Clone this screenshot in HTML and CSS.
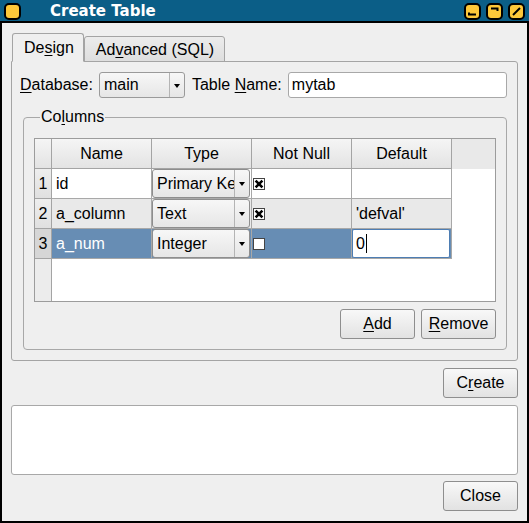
FILE: index.html
```html
<!DOCTYPE html>
<html>
<head>
<meta charset="utf-8">
<link rel="stylesheet" href="styles.css">
</head>
<body>
<div class="window">
  <div class="titlebar">
    <svg class="ticon" width="17" height="17" viewBox="0 0 17 17"><rect x="1" y="1" width="15" height="15" rx="4" fill="#fdc83a" stroke="#000" stroke-width="2"/></svg>
    <span class="title">Create Table</span>
    <div class="tbtns">
      <svg width="17" height="17" viewBox="0 0 17 17"><rect x="1" y="1" width="15" height="15" rx="4" fill="#fdc83a" stroke="#000" stroke-width="2"/><path d="M5 9.5 V11.5 H12" fill="none" stroke="#000" stroke-width="2"/></svg>
      <svg width="17" height="17" viewBox="0 0 17 17"><rect x="1" y="1" width="15" height="15" rx="4" fill="#fdc83a" stroke="#000" stroke-width="2"/><path d="M5 5.5 H11.5 V8" fill="none" stroke="#000" stroke-width="2"/></svg>
      <svg width="17" height="17" viewBox="0 0 17 17"><rect x="1" y="1" width="15" height="15" rx="4" fill="#fdc83a" stroke="#000" stroke-width="2"/><path d="M5 12 L12 5" fill="none" stroke="#000" stroke-width="2"/></svg>
    </div>
  </div>
  <div class="body">
    <div class="tabs">
      <div class="tab active">De<u>s</u>ign</div>
      <div class="tab">Ad<u>v</u>anced (SQL)</div>
    </div>
    <div class="pane">
      <div class="dbrow">
        <span class="lbl"><u>D</u>atabase:</span>
        <div class="combo db"><span class="ctext">main</span><span class="carrow"><i></i></span></div>
        <span class="lbl tn">Table <u>N</u>ame:</span>
        <div class="input">mytab</div>
      </div>
      <fieldset class="group">
        <legend>Co<u>l</u>umns</legend>
        <div class="grid">
          <div class="hc"></div>
          <div class="hc">Name</div>
          <div class="hc">Type</div>
          <div class="hc">Not Null</div>
          <div class="hc">Default</div>
          <div class="hfill"></div>

          <div class="rh">1</div>
          <div class="cell">id</div>
          <div class="cell tc"><div class="combo"><span class="ctext">Primary Key</span><span class="carrow"><i></i></span></div></div>
          <div class="cell cc"><svg class="chk" width="12" height="12" viewBox="0 0 12 12"><rect x="0.5" y="0.5" width="11" height="11" fill="#fff" stroke="#444"/><path d="M2.6 2.6 L9.4 9.4 M9.4 2.6 L2.6 9.4" stroke="#000" stroke-width="2.6"/></svg></div>
          <div class="cell"></div>
          <div class="fill"></div>

          <div class="rh">2</div>
          <div class="cell alt">a_column</div>
          <div class="cell alt tc"><div class="combo"><span class="ctext">Text</span><span class="carrow"><i></i></span></div></div>
          <div class="cell alt cc"><svg class="chk" width="12" height="12" viewBox="0 0 12 12"><rect x="0.5" y="0.5" width="11" height="11" fill="#fff" stroke="#444"/><path d="M2.6 2.6 L9.4 9.4 M9.4 2.6 L2.6 9.4" stroke="#000" stroke-width="2.6"/></svg></div>
          <div class="cell alt">'defval'</div>
          <div class="fill"></div>

          <div class="rh cur">3</div>
          <div class="cell sel">a_num</div>
          <div class="cell sel tc"><div class="combo focus"><span class="ctext">Integer</span><span class="carrow"><i></i></span></div></div>
          <div class="cell sel cc"><svg class="chk" width="12" height="12" viewBox="0 0 12 12"><rect x="0.5" y="0.5" width="11" height="11" fill="#fff" stroke="#444"/></svg></div>
          <div class="cell ed"><div class="editor">0<span class="caret"></span></div></div>
          <div class="fill"></div>

          <div class="rhfill"></div>
          <div class="bfill"></div>
        </div>
        <div class="btnrow">
          <div class="btn"><u>A</u>dd</div>
          <div class="btn"><u>R</u>emove</div>
        </div>
      </fieldset>
    </div>
    <div class="actions create"><div class="btn">C<u>r</u>eate</div></div>
    <div class="log"></div>
    <div class="actions"><div class="btn">Close</div></div>
  </div>
</div>
</body>
</html>
```
FILE: styles.css
```css
* { box-sizing: border-box; }
html, body { margin: 0; padding: 0; }
body {
  font-family: "Liberation Sans", Arial, sans-serif;
  font-size: 16px;
  color: #000;
  background: #000;
}
u { text-decoration: underline; text-underline-offset: 2px; }

.window {
  width: 529px;
  height: 523px;
  display: flex;
  flex-direction: column;
  background: #000;
}
.titlebar {
  height: 23px;
  background: #0b5e87;
  border-bottom: 2px solid #000;
  display: flex;
  align-items: center;
  padding: 1px 4px 0 4px;
}
.ticon { display: block; }
.title {
  font-family: "DejaVu Sans", sans-serif;
  font-weight: bold;
  font-size: 15px;
  color: #fff;
  margin-left: 29px;
  line-height: 18px;
}
.tbtns {
  margin-left: auto;
  display: flex;
  gap: 5px;
}
.tbtns svg { display: block; }

.body {
  flex: 1;
  margin: 0 2px 2px 2px;
  background: #efefef;
  padding: 10px 9px 10px 9px;
  display: flex;
  flex-direction: column;
}

.tabs {
  display: flex;
  align-items: flex-end;
  padding-left: 1px;
  height: 29px;
  position: relative;
  z-index: 1;
  margin-bottom: -1px;
}
.tab {
  height: 26px;
  border: 1px solid #a4a4a4;
  border-radius: 3px 3px 0 0;
  background: linear-gradient(#ececec, #dedede);
  padding: 1px 10px 0 11px;
  display: flex;
  align-items: center;
}
.tab.active {
  height: 29px;
  background: #efefef;
  border-bottom-color: #efefef;
  padding: 0 9px 0 11px;
}

.pane {
  height: 300px;
  border: 1px solid #a4a4a4;
  border-radius: 0 3px 3px 3px;
  padding: 10px 10px 9px 8px;
  display: flex;
  flex-direction: column;
}
.dbrow {
  display: flex;
  align-items: center;
  height: 26px;
}
.lbl { white-space: nowrap; }
.combo {
  display: flex;
  height: 26px;
  border: 1px solid #9a9a9a;
  border-radius: 3px;
  background: linear-gradient(#f7f7f7, #e6e6e6);
  overflow: hidden;
}
.combo.db { width: 86px; margin-left: 6px; margin-right: 7px; }
.ctext {
  flex: 1;
  padding-left: 4px;
  display: flex;
  align-items: center;
  white-space: nowrap;
  overflow: hidden;
}
.carrow {
  width: 15px;
  border-left: 1px solid #b4b4b4;
  display: flex;
  align-items: center;
  justify-content: center;
}
.carrow i {
  display: block;
  width: 0; height: 0;
  border-left: 3.5px solid transparent;
  border-right: 3.5px solid transparent;
  border-top: 4px solid #000;
  margin-top: 1px;
}
.input {
  margin-left: 6px;
  flex: 1;
  height: 26px;
  background: #fff;
  border: 1px solid #a8a8a8;
  border-radius: 3px;
  padding-left: 3px;
  display: flex;
  align-items: center;
}

.group {
  margin: 10px 0 0 3px;
  border: 1px solid #a8a8a8;
  border-radius: 4px;
  padding: 12px 10px 10px 10px;
  min-width: 0;
}
.group legend {
  padding: 0 1px;
  margin-left: 6px;
  line-height: 18px;
}
.grid {
  height: 164px;
  border: 1px solid #9c9c9c;
  background: #fff;
  display: grid;
  grid-template-columns: 17px 100px 100px 100px 100px 1fr;
  grid-template-rows: 30px 30px 30px 30px 1fr;
}
.hc {
  background: linear-gradient(#f5f5f5, #e3e3e3);
  border-right: 1px solid #a4a4a4;
  border-bottom: 1px solid #a4a4a4;
  display: flex;
  align-items: center;
  justify-content: center;
}
.hfill { background: #e9e9e9; }
.rh {
  background: linear-gradient(#eeeeee, #e0e0e0);
  border-right: 1px solid #a4a4a4;
  border-bottom: 1px solid #a4a4a4;
  display: flex;
  align-items: center;
  justify-content: center;
}
.rh.cur { background: #d6d6d6; }
.cell {
  background: #fff;
  border-right: 1px solid #a8a8a8;
  border-bottom: 1px solid #a8a8a8;
  display: flex;
  align-items: center;
  padding-left: 4px;
  white-space: nowrap;
  overflow: hidden;
}
.cell.alt { background: #e9e9e9; }
.cell.sel { background: #678db4; color: #fff; }
.cell.tc { padding: 0 1px 0 0; align-items: stretch; }
.cell.tc .combo { flex: 1; height: auto; color: #000; border-color: #8e8e8e; }
.combo.focus { border-color: #555; }
.cell.cc { padding-left: 1px; }
.chk { display: block; }
.cell.ed { padding: 0 1px 0 0; align-items: stretch; background: #678db4; }
.editor {
  flex: 1;
  background: #fff;
  border: 1px solid #4d7db3;
  border-radius: 2px;
  display: flex;
  align-items: center;
  padding-left: 3px;
  color: #000;
}
.caret {
  display: inline-block;
  width: 1px;
  height: 19px;
  background: #000;
  margin-left: 1px;
}
.fill { background: #fff; }
.rhfill {
  background: #ececec;
  border-right: 1px solid #a4a4a4;
}
.bfill { grid-column: 2 / 7; background: #fff; }

.btnrow {
  display: flex;
  justify-content: flex-end;
  gap: 6px;
  margin-top: 7px;
}
.btn {
  width: 75px;
  height: 30px;
  border: 1px solid #8e8e8e;
  border-radius: 3px;
  background: linear-gradient(#f8f8f8, #e2e2e2);
  display: flex;
  align-items: center;
  justify-content: center;
}
.actions {
  display: flex;
  justify-content: flex-end;
}
.actions.create { margin-top: 7px; }
.log {
  margin: 7px 0 6px 0;
  height: 70px;
  background: #fff;
  border: 1px solid #a8a8a8;
  border-radius: 3px;
}
```
